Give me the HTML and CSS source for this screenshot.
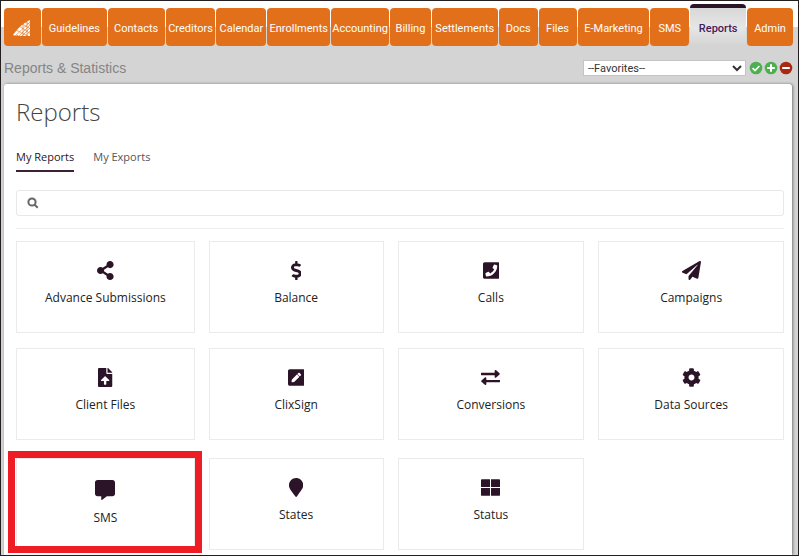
FILE: index.html
```html
<!DOCTYPE html>
<html lang="en">

<head>
    <meta charset="UTF-8">
    <meta name="viewport" content="width=device-width, initial-scale=1.0">
    <title>Reports &amp; Statistics</title>
    <link rel="stylesheet" href="styles.css">
</head>

<body>
    <!-- Main navigation -->
    <nav class="main-nav">
        <a class="nav-tab" href="#" aria-label="Home">
            <svg class="logo" viewBox="0 0 18 18">
                <path fill="#fff" d="M17 1C10 4 5 9 0 16l3 1 1-1 2 1 11 0z" />
                <path fill="none" stroke="#e2701a" stroke-width=".6" d="M17 3L2 17M17 6L5 18M17 9L8 18M17 12L12 18M6 7l12 8M9 5l9 5M3 11l14 7M12 3l6 3M14 2v16M10 4v14" />
            </svg>
        </a>
        <a class="nav-tab" href="#">Guidelines</a>
        <a class="nav-tab" href="#">Contacts</a>
        <a class="nav-tab" href="#">Creditors</a>
        <a class="nav-tab" href="#">Calendar</a>
        <a class="nav-tab" href="#">Enrollments</a>
        <a class="nav-tab" href="#">Accounting</a>
        <a class="nav-tab" href="#">Billing</a>
        <a class="nav-tab" href="#">Settlements</a>
        <a class="nav-tab" href="#">Docs</a>
        <a class="nav-tab" href="#">Files</a>
        <a class="nav-tab" href="#">E-Marketing</a>
        <a class="nav-tab" href="#">SMS</a>
        <a class="nav-tab active" href="#">Reports</a>
        <a class="nav-tab" href="#">Admin</a>
    </nav>

    <!-- Section title and favorites -->
    <div class="sub-header">
        <h2>Reports &amp; Statistics</h2>
        <div class="favorites">
            <select id="favorites" aria-label="Favorites">
                <option>--Favorites--</option>
            </select>
            <button class="round-button" aria-label="Go">
                <svg viewBox="0 0 14 14">
                    <circle cx="7" cy="7" r="6.3" fill="#4caf50" />
                    <path d="M3.6 7.2l2.4 2.3 4.4-4.5" fill="none" stroke="#fff" stroke-width="1.7" />
                </svg>
            </button>
            <button class="round-button" aria-label="Add">
                <svg viewBox="0 0 14 14">
                    <circle cx="7" cy="7" r="6.3" fill="#4caf50" />
                    <path d="M7 3.2v7.6M3.2 7h7.6" fill="none" stroke="#fff" stroke-width="2" />
                </svg>
            </button>
            <button class="round-button" aria-label="Remove">
                <svg viewBox="0 0 14 14">
                    <circle cx="7" cy="7" r="6.3" fill="#a82a12" />
                    <path d="M3.2 7h7.6" fill="none" stroke="#fff" stroke-width="2" />
                </svg>
            </button>
        </div>
    </div>

    <main class="panel">
        <h1>Reports</h1>

        <div class="report-tabs">
            <a class="report-tab active" href="#">My Reports</a>
            <a class="report-tab" href="#">My Exports</a>
        </div>

        <div class="search-box">
            <label for="search">
                <svg viewBox="0 0 12 12" role="img" aria-label="Search">
                    <circle cx="5" cy="5" r="3.6" />
                    <path d="M7.7 7.7l3 3" />
                </svg>
            </label>
            <input type="text" id="search">
        </div>

        <div class="tile-grid">
            <a class="tile" href="#">
                <svg viewBox="0 0 448 512"><path d="M352 320c-22.608 0-43.387 7.819-59.79 20.895l-102.486-64.054a96.551 96.551 0 0 0 0-41.683l102.486-64.054C308.613 184.181 329.392 192 352 192c53.019 0 96-42.981 96-96S405.019 0 352 0s-96 42.981-96 96c0 7.158.79 14.13 2.276 20.841L155.79 180.895C139.387 167.819 118.608 160 96 160c-53.019 0-96 42.981-96 96s42.981 96 96 96c22.608 0 43.387-7.819 59.79-20.895l102.486 64.054A96.301 96.301 0 0 0 256 416c0 53.019 42.981 96 96 96s96-42.981 96-96-42.981-96-96-96z" /></svg>
                <span>Advance Submissions</span>
            </a>
            <a class="tile" href="#">
                <svg viewBox="0 0 288 512"><path d="M209.2 233.4l-108-31.6C88.7 198.2 80 186.5 80 173.500c0-16.300 13.200-29.500 29.500-29.500h66.300c12.200 0 24.200 3.700 34.200 10.500 6.100 4.100 14.300 3.100 19.500-2l34.800-34c7.100-6.900 6.100-18.400-1.800-24.500C238 74.800 207.400 64.100 176 64V16c0-8.800-7.200-16-16-16h-32c-8.800 0-16 7.200-16 16v48h-2.500C45.800 64-5.400 118.700.5 183.600c4.200 46.100 39.400 83.600 83.800 96.600l102.500 30c12.500 3.700 21.200 15.300 21.200 28.300 0 16.300-13.200 29.500-29.500 29.500h-66.300C100 368 88 364.300 78 357.500c-6.100-4.100-14.300-3.100-19.500 2l-34.800 34c-7.100 6.900-6.100 18.400 1.800 24.500 24.500 19.200 55.100 29.900 86.500 30v48c0 8.800 7.200 16 16 16h32c8.800 0 16-7.200 16-16v-48.200c46.600-.9 90.300-28.600 105.700-72.700 21.500-61.600-14.600-124.800-72.500-141.700z" /></svg>
                <span>Balance</span>
            </a>
            <a class="tile" href="#">
                <svg viewBox="0 0 448 512"><path d="M400 32H48C21.490 32 0 53.490 0 80v352c0 26.510 21.490 48 48 48h352c26.510 0 48-21.490 48-48V80c0-26.510-21.490-48-48-48zM94 416c-7.033 0-13.057-4.873-14.616-11.627l-14.998-65a15 15 0 0 1 8.707-17.160l69.998-29.999a15 15 0 0 1 17.518 4.289l30.997 37.885c48.944-22.963 88.297-62.858 110.781-110.780l-37.886-30.997a15.001 15.001 0 0 1-4.289-17.518l30-69.998a15 15 0 0 1 17.160-8.707l65 14.998A14.997 14.997 0 0 1 384 126c0 160.292-129.945 290-290 290z" /></svg>
                <span>Calls</span>
            </a>
            <a class="tile" href="#">
                <svg viewBox="0 0 512 512"><path d="M476 3.200L12.500 270.600c-18.100 10.400-15.800 35.600 2.200 43.200L121 358.400l287.300-253.200c5.500-4.900 13.300 2.600 8.600 8.300L176 407v80.500c0 23.600 28.500 32.900 42.500 15.800L282 426l124.600 52.200c14.200 6 30.400-2.900 33-18.200l72-432C515 7.800 493.300-6.800 476 3.200z" /></svg>
                <span>Campaigns</span>
            </a>
            <a class="tile" href="#">
                <svg viewBox="0 0 384 512"><path d="M224 136V0H24C10.700 0 0 10.700 0 24v464c0 13.300 10.700 24 24 24h336c13.300 0 24-10.700 24-24V160H248c-13.200 0-24-10.800-24-24zm65.180 216.010H224v80c0 8.840-7.160 16-16 16h-32c-8.840 0-16-7.160-16-16v-80H94.820c-14.280 0-21.410-17.290-11.270-27.360l96.420-95.700c6.650-6.610 17.390-6.610 24.040 0l96.420 95.700c10.150 10.070 3.030 27.360-11.250 27.360zM377 105L279.100 7c-4.500-4.500-10.600-7-17-7H256v128h128v-6.100c0-6.300-2.500-12.400-7-16.900z" /></svg>
                <span>Client Files</span>
            </a>
            <a class="tile" href="#">
                <svg viewBox="0 0 448 512"><path d="M400 480H48c-26.500 0-48-21.500-48-48V80c0-26.500 21.500-48 48-48h352c26.500 0 48 21.500 48 48v352c0 26.500-21.500 48-48 48zM238.100 177.900L102.400 313.600l-6.300 57.100c-.8 7.600 5.600 14.100 13.300 13.300l57.100-6.300L302.200 242c2.300-2.300 2.300-6.100 0-8.500L246.700 178c-2.500-2.400-6.300-2.400-8.600-.1zM345 165.100L314.900 135c-9.400-9.400-24.600-9.400-33.900 0l-23.100 23.100c-2.300 2.300-2.300 6.100 0 8.500l55.500 55.500c2.300 2.300 6.100 2.300 8.500 0L345 199c9.300-9.300 9.300-24.500 0-33.900z" /></svg>
                <span>ClixSign</span>
            </a>
            <a class="tile" href="#">
                <svg viewBox="0 0 512 512"><path d="M12 128h356V78c0-21 25-32 40-17l92 81c10 9 10 25 0 34l-92 81c-15 15-40 4-40-17v-48H12c-7 0-12-5-12-12v-40c0-7 5-12 12-12zM500 320H144v-50c0-21-25-32-40-17l-92 81c-10 9-10 25 0 34l92 81c15 15 40 4 40-17v-48h356c7 0 12-5 12-12v-40c0-7-5-12-12-12z" /></svg>
                <span>Conversions</span>
            </a>
            <a class="tile" href="#">
                <svg viewBox="0 0 512 512"><path d="M487.400 315.700l-42.600-24.600c4.300-23.200 4.300-47 0-70.200l42.600-24.600c4.900-2.800 7.100-8.600 5.500-14-11.100-35.600-30-67.800-54.700-94.600-3.800-4.100-10-5.100-14.800-2.300L380.800 110c-17.900-15.400-38.500-27.300-60.800-35.100V25.800c0-5.600-3.900-10.500-9.400-11.700-36.700-8.200-74.300-7.800-109.200 0-5.500 1.200-9.400 6.100-9.400 11.700V75c-22.200 7.900-42.800 19.800-60.800 35.100L88.700 85.500c-4.900-2.800-11-1.900-14.800 2.300-24.700 26.700-43.600 58.900-54.700 94.600-1.700 5.400.6 11.200 5.500 14L67.300 221c-4.300 23.200-4.300 47 0 70.200l-42.600 24.600c-4.900 2.800-7.100 8.600-5.500 14 11.100 35.600 30 67.800 54.700 94.600 3.800 4.100 10 5.100 14.800 2.300l42.600-24.600c17.900 15.400 38.500 27.300 60.800 35.100v49.200c0 5.600 3.900 10.500 9.400 11.700 36.700 8.200 74.300 7.800 109.200 0 5.500-1.200 9.400-6.100 9.400-11.700v-49.200c22.200-7.900 42.800-19.800 60.800-35.100l42.600 24.600c4.900 2.800 11 1.900 14.800-2.300 24.700-26.700 43.600-58.900 54.700-94.600 1.500-5.500-.7-11.300-5.600-14.100zM256 336c-44.100 0-80-35.900-80-80s35.900-80 80-80 80 35.900 80 80-35.900 80-80 80z" /></svg>
                <span>Data Sources</span>
            </a>
        </div>

        <div class="tile-grid">
            <a class="tile highlighted" href="#">
                <svg viewBox="0 0 512 512"><path d="M448 0H64C28.700 0 0 28.700 0 64v288c0 35.300 28.700 64 64 64h96v84c0 9.800 11.200 15.500 19.100 9.700L304 416h144c35.300 0 64-28.700 64-64V64c0-35.300-28.700-64-64-64z" /></svg>
                <span>SMS</span>
            </a>
            <a class="tile" href="#">
                <svg viewBox="0 0 384 512"><path d="M172.268 501.670C26.970 291.031 0 269.413 0 192 0 85.961 85.961 0 192 0s192 85.961 192 192c0 77.413-26.970 99.031-172.268 309.670-9.535 13.774-29.930 13.773-39.464 0z" /></svg>
                <span>States</span>
            </a>
            <a class="tile" href="#">
                <svg viewBox="0 0 512 512"><path d="M24 32h218v212H0V56c0-13 11-24 24-24zM270 32h218c13 0 24 11 24 24v188H270zM0 268h242v212H24c-13 0-24-11-24-24zM270 268h242v188c0 13-11 24-24 24H270z" /></svg>
                <span>Status</span>
            </a>
        </div>
    </main>
</body>

</html>
```

FILE: styles.css
```css
* {
    box-sizing: border-box;
}

body {
    display: flex;
    flex-direction: column;
    min-height: 100vh;
    margin: 0;
    padding: 0 5px 0 3px;
    border: 1px solid #231f20;
    font-family: "Open Sans", sans-serif;
    background: linear-gradient(#fff 27px, #d4d4d4 27px);
}

a {
    text-decoration: none;
}

/* Main navigation */
.main-nav {
    display: grid;
    grid-template-columns: 37fr 65fr 57fr 50fr 50fr 63fr 58fr 41fr 66fr 39fr 38fr 72fr 39fr 56fr 46fr;
    gap: 1px;
    padding-top: 3px;
}

.nav-tab {
    display: flex;
    align-items: center;
    justify-content: center;
    height: 38px;
    margin-top: 4px;
    padding-top: 2px;
    border-radius: 4px;
    background-color: #e2701a;
    color: #fff;
    font-family: Roboto, sans-serif;
    font-size: 11px;
}

.nav-tab.active {
    height: 42px;
    margin-top: 0;
    border-top: 4px solid #2b1428;
    border-radius: 4px 4px 0 0;
    background: linear-gradient(#d8d8d8, #e6e6e6 20px, #d4d4d4);
    color: #44205a;
    font-weight: 500;
}

.logo {
    width: 18px;
    height: 18px;
}

/* Section title and favorites */
.sub-header {
    display: flex;
    align-items: center;
    justify-content: space-between;
    height: 38px;
    padding-top: 5px;
}

.sub-header h2 {
    margin: 0;
    color: #858585;
    font-family: "Liberation Sans", Arial, sans-serif;
    font-size: 14px;
    font-weight: normal;
}

.favorites {
    display: flex;
    align-items: center;
    gap: 1px;
}

.favorites select {
    width: 163px;
    height: 16px;
    margin-right: 2px;
    padding: 0;
    border: 1px solid #c4c4c4;
    background-color: #fff;
    color: #333;
    font-family: Roboto, sans-serif;
    font-size: 11px;
}

.round-button {
    width: 14px;
    height: 14px;
    padding: 0;
    border: none;
    background: none;
    cursor: pointer;
}

.round-button svg {
    display: block;
}

/* Content panel */
.panel {
    flex: 1;
    margin-right: 1px;
    padding: 11px 8px 4px 12px;
    border-radius: 3px 3px 0 0;
    background-color: #fff;
    box-shadow: 1px 0 3px #777;
}

.panel h1 {
    margin: 0;
    color: #444;
    font-size: 24px;
    font-weight: 300;
    line-height: 33px;
}

.report-tabs {
    display: flex;
    gap: 19px;
    margin-top: 20px;
}

.report-tab {
    padding-bottom: 5px;
    border-bottom: 2px solid transparent;
    color: #555;
    font-size: 11px;
    font-weight: 500;
    line-height: 17px;
}

.report-tab.active {
    border-bottom-color: #3b2238;
    color: #2b1428;
}

.search-box {
    display: flex;
    align-items: center;
    height: 26px;
    margin-top: 18px;
    padding-left: 10px;
    border: 1px solid #e8e8e8;
    border-radius: 3px;
}

.search-box svg {
    display: block;
    width: 12px;
    height: 12px;
    fill: none;
    stroke: #666;
    stroke-width: 2;
}

.search-box input {
    flex: 1;
    padding: 0 8px;
    border: none;
    outline: none;
    background: none;
    font-family: inherit;
    font-size: 12px;
}

/* Report tiles */
.tile-grid {
    display: grid;
    grid-template-columns: 179fr 175fr 187fr 186fr;
    gap: 15px 14px;
    margin-top: 12px;
    padding-top: 12px;
    border-top: 1px solid #eee;
}

.tile-grid + .tile-grid {
    margin-top: 18px;
    padding-top: 0;
    border-top: none;
}

.tile {
    position: relative;
    display: flex;
    flex-direction: column;
    align-items: center;
    gap: 9px;
    height: 92px;
    padding-top: 19px;
    border: 1px solid #ebebeb;
    color: #222;
    font-size: 12px;
    font-weight: 500;
    line-height: 18px;
}

.tile svg {
    height: 19px;
    fill: #2b1428;
}

.tile.highlighted {
    padding-top: 21px;
}

.tile.highlighted svg {
    height: 20px;
}

/* Red frame drawn around the selected tile */
.tile.highlighted::after {
    content: '';
    position: absolute;
    inset: -8px -8px -4px -9px;
    border: 7px solid #ee1c25;
}
```
